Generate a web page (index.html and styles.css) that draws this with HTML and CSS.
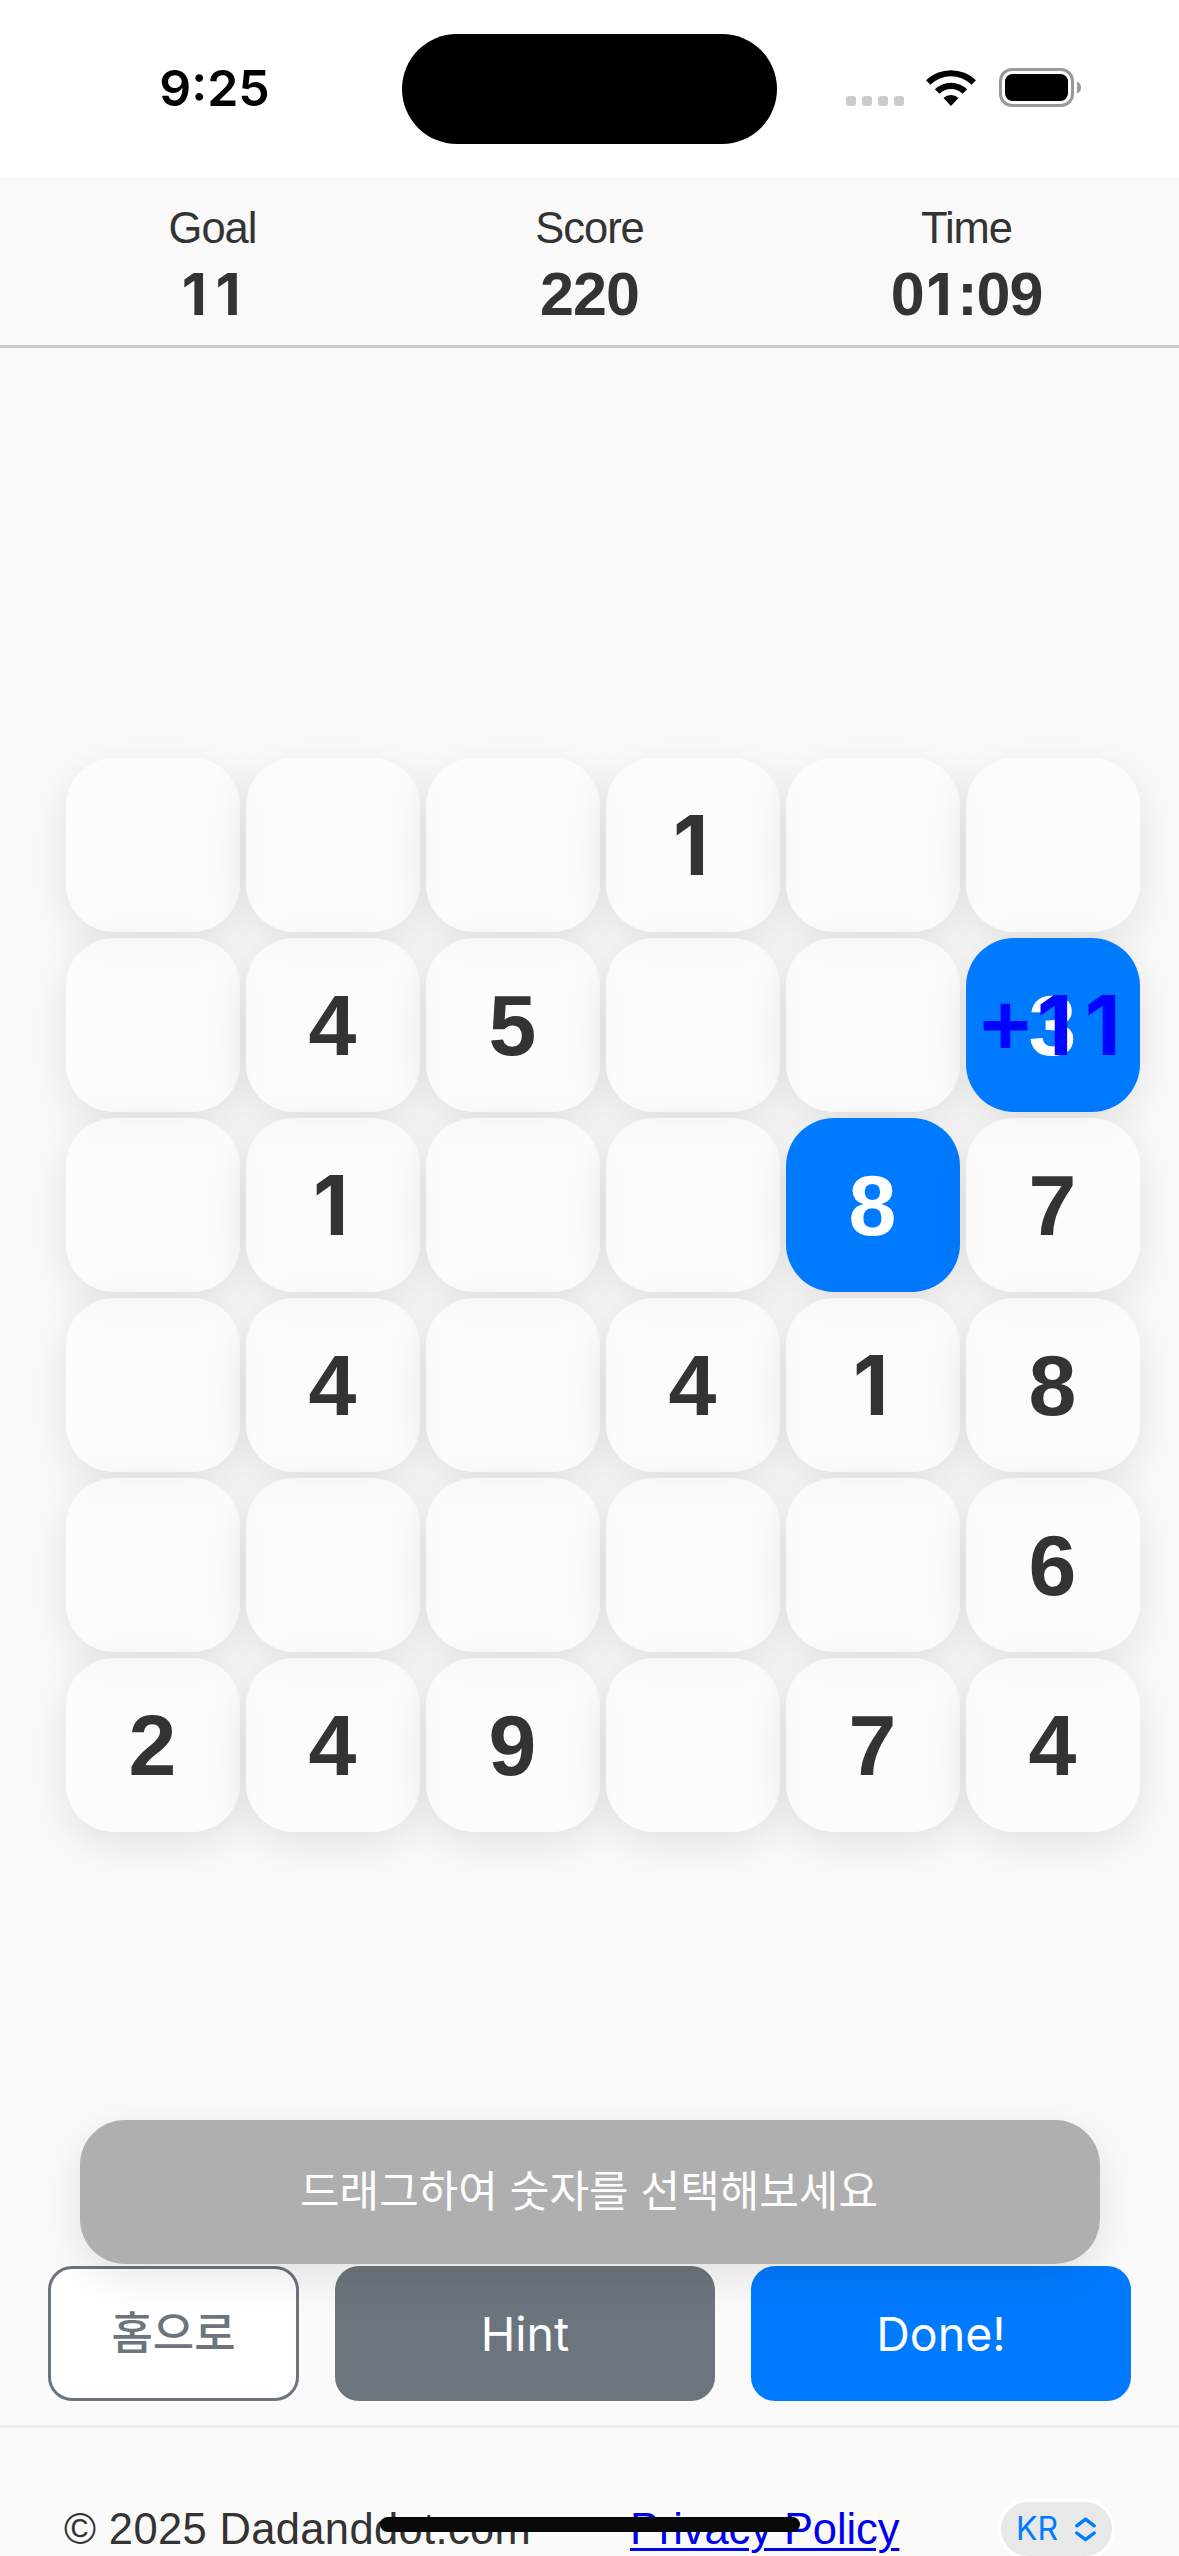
FILE: index.html
```html
<!DOCTYPE html>
<html lang="ko">
<head>
<meta charset="utf-8">
<title>Dadanddot</title>
<link rel="stylesheet" href="styles.css">
</head>
<body>
<div class="status">
  <div class="clock">9:25</div>
  <div class="island"></div>
  <div class="indicators">
    <div class="dots"><i></i><i></i><i></i><i></i></div>
    <svg class="wifi" width="50" height="37" viewBox="0 0 50 37">
      <path d="M0 11.3A36 36 0 0 1 50 11.3L45.600 15.700A29.500 29.500 0 0 0 4.400 15.700Z"/>
      <path d="M8.900 20.300A23 23 0 0 1 41.100 20.300L36.600 24.800A16.500 16.500 0 0 0 13.400 24.800Z"/>
      <path d="M17.500 29A10.800 10.800 0 0 1 32.500 29L25 37Z"/>
    </svg>
    <svg class="battery" width="82" height="39" viewBox="0 0 82 39">
      <rect x="1.500" y="1.500" width="72" height="36" rx="11.500" fill="none" stroke="#999" stroke-width="3"/>
      <rect x="6" y="6" width="63" height="27" rx="7.500"/>
      <path d="M78 13.500Q82 15 82 19.500Q82 24 78 25.500Z" fill="#999"/>
    </svg>
  </div>
</div>

<header class="stats">
  <div class="stat"><span class="label">Goal</span><strong><span class="one">1</span><span class="one">1</span></strong></div>
  <div class="stat"><span class="label">Score</span><strong>220</strong></div>
  <div class="stat"><span class="label">Time</span><strong>0<span class="one">1</span>:09</strong></div>
</header>

<main class="board">
  <div class="grid">
    <div class="cell"></div><div class="cell"></div><div class="cell"></div><div class="cell"><span class="one">1</span></div><div class="cell"></div><div class="cell"></div>
    <div class="cell"></div><div class="cell">4</div><div class="cell">5</div><div class="cell"></div><div class="cell"></div><div class="cell selected">3<span class="gain">+<span class="one">1</span><span class="one">1</span></span></div>
    <div class="cell"></div><div class="cell"><span class="one">1</span></div><div class="cell"></div><div class="cell"></div><div class="cell selected">8</div><div class="cell">7</div>
    <div class="cell"></div><div class="cell">4</div><div class="cell"></div><div class="cell">4</div><div class="cell"><span class="one">1</span></div><div class="cell">8</div>
    <div class="cell"></div><div class="cell"></div><div class="cell"></div><div class="cell"></div><div class="cell"></div><div class="cell">6</div>
    <div class="cell">2</div><div class="cell">4</div><div class="cell">9</div><div class="cell"></div><div class="cell">7</div><div class="cell">4</div>
  </div>
</main>

<div class="actions">
  <div class="toast">드래그하여 숫자를 선택해보세요</div>
  <button class="btn home">홈으로</button>
  <button class="btn hint">Hint</button>
  <button class="btn done">Done!</button>
</div>

<footer class="footer">
  <span class="copy">© 2025 Dadanddot.com</span>
  <a class="privacy" href="#">Privacy Policy</a>
  <div class="lang">
    <span>KR</span>
    <svg width="21" height="25" viewBox="0 0 21 25" fill="none" stroke="#007aff" stroke-width="3.400" stroke-linecap="round" stroke-linejoin="round"><path d="M1.800 8.800L10.500 2.200L19.200 8.800M1.800 16L10.500 22.600L19.200 16"/></svg>
  </div>
</footer>
<div class="home-indicator"></div>
</body>
</html>
```
FILE: styles.css
```css
* {
  box-sizing: border-box;
}

body {
  position: relative;
  display: flex;
  flex-direction: column;
  width: 1179px;
  height: 2556px;
  margin: 0;
  overflow: hidden;
  background: #fafafa;
  color: #333;
  font-family: "Liberation Sans", "Noto Sans CJK KR", sans-serif;
}

.status {
  display: grid;
  grid-template-columns: 402px 375px 402px;
  height: 177px;
  padding-top: 34px;
  background: #fff;
  color: #000;
}

.clock {
  padding-left: 27px;
  font: 600 50px/108px Inter, sans-serif;
  text-align: center;
}

.island {
  height: 110px;
  border-radius: 55px;
  background: #000;
}

.indicators {
  display: flex;
  align-items: flex-start;
  padding: 34px 0 0 69px;
}

.dots {
  display: flex;
  gap: 6px;
  margin: 28px 22px 0 0;
}

.dots i {
  width: 10px;
  height: 10px;
  border-radius: 3px;
  background: #ccc;
}

.wifi {
  margin: 1px 23px 0 0;
}

.stats {
  display: grid;
  grid-template-columns: repeat(3, 1fr);
  height: 171px;
  padding: 27px 24px 0;
  border-bottom: 3px solid #ccc;
  background: #f9f9f9;
}

.stat {
  display: flex;
  flex-direction: column;
  align-items: center;
}

.label {
  font-size: 43.5px;
  line-height: 49px;
  letter-spacing: -1px;
}

.stat strong {
  margin-top: 7px;
  font-size: 61px;
  line-height: 69px;
  letter-spacing: -1px;
}

/* Footless "1" in a tabular-width box */
.one {
  display: inline-block;
  width: 0.576em;
  padding-right: 0.045em;
  font-family: Inter, sans-serif;
  font-size: 0.955em;
  line-height: 1;
  letter-spacing: 0;
  text-align: center;
}

.board {
  flex: 1;
  padding: 410px 39px 0 66px;
}

.grid {
  display: grid;
  grid-template-columns: repeat(6, 174px);
  grid-auto-rows: 174px;
  gap: 6px;
}

.cell {
  position: relative;
  display: flex;
  align-items: center;
  justify-content: center;
  padding-right: 1px;
  border-radius: 48px;
  background: rgba(253, 253, 253, 0.65);
  box-shadow: 0 12px 45px rgba(0, 0, 0, 0.1);
  font-size: 86px;
  font-weight: 700;
}

.cell.selected {
  background: #007aff;
  color: #fff;
}

.gain {
  position: absolute;
  left: 14px;
  top: 37px;
  color: #00f;
  font-size: 87px;
  line-height: 100px;
  white-space: nowrap;
  opacity: 0.97;
}

.gain .one {
  padding-right: 0;
}

.actions {
  position: relative;
  display: grid;
  grid-template-columns: 251px 380px 380px;
  gap: 36px;
  padding: 0 48px 24px;
}

.toast {
  position: absolute;
  left: 80px;
  right: 79px;
  bottom: 161px;
  height: 144px;
  padding-right: 2px;
  border-radius: 45px;
  background: #afafaf;
  box-shadow: 0 12px 45px rgba(0, 0, 0, 0.1);
  color: #fdfdfd;
  font: 400 43px/136px "Noto Sans CJK KR", sans-serif;
  text-align: center;
}

.btn {
  height: 135px;
  padding: 0;
  border: 0;
  border-radius: 24px;
  color: #fff;
  font: 400 46.5px/135px Inter, "Noto Sans CJK KR", sans-serif;
}

.home {
  border: 3px solid #6c757d;
  background: #fff;
  color: #6c757d;
  font-size: 45px;
  font-weight: 500;
  line-height: 129px;
}

.hint,
.done {
  padding-top: 1px;
}

.hint {
  background: #6c757d;
}

.done {
  background: #007aff;
}

.footer {
  display: flex;
  align-items: flex-start;
  height: 131px;
  padding: 71px 64px 0;
  border-top: 3px solid #eee;
  font-size: 43.5px;
  line-height: 60px;
}

.copy {
  width: 566px;
  letter-spacing: 0.35px;
}

.privacy {
  width: 368px;
  color: #00e;
  letter-spacing: -0.1px;
  text-decoration-thickness: 3px;
  text-underline-offset: 4px;
}

.lang {
  display: flex;
  flex: none;
  align-items: center;
  gap: 17px;
  width: 117px;
  height: 60px;
  padding-left: 15px;
  border: 3px solid #fff;
  border-radius: 30px;
  background: #e8e8e8;
  color: #007aff;
  font: 400 32px/54px Inter, sans-serif;
}

.home-indicator {
  position: absolute;
  left: 380px;
  bottom: 24px;
  width: 420px;
  height: 15px;
  border-radius: 8px;
  background: #080808;
}
```
